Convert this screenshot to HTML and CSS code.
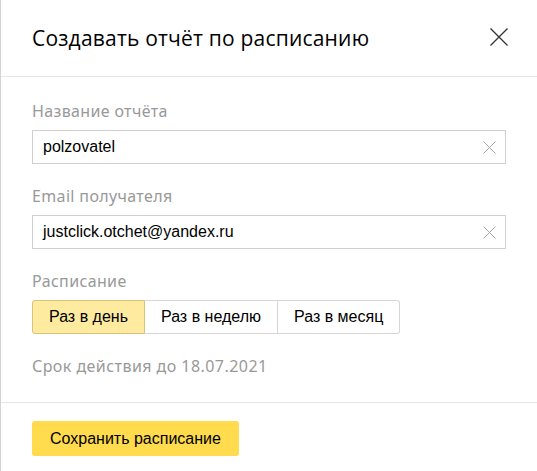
FILE: index.html
```html
<!DOCTYPE html>
<html lang="ru">
<head>
<meta charset="utf-8">
<title>Создавать отчёт по расписанию</title>
<link rel="stylesheet" href="styles.css">
</head>
<body>
<div class="modal">
  <div class="modal-header">
    <h1 class="modal-title">Создавать отчёт по расписанию</h1>
    <button class="close-btn" aria-label="Закрыть">
      <svg width="18" height="18" viewBox="0 0 18 18"><path d="M0.5 0.5 L17.5 17.5 M17.5 0.5 L0.5 17.5" stroke="#333" stroke-width="1.3" fill="none"/></svg>
    </button>
  </div>
  <div class="modal-body">
    <div class="field">
      <div class="field-label">Название отчёта</div>
      <div class="input">
        <span class="input-text">polzovatel</span>
        <svg class="clear" width="13" height="13" viewBox="0 0 13 13"><path d="M0.5 0.5 L12.5 12.5 M12.5 0.5 L0.5 12.5" stroke="#a6a6a6" stroke-width="1" fill="none"/></svg>
      </div>
    </div>
    <div class="field">
      <div class="field-label">Email получателя</div>
      <div class="input">
        <span class="input-text">justclick.otchet@yandex.ru</span>
        <svg class="clear" width="13" height="13" viewBox="0 0 13 13"><path d="M0.5 0.5 L12.5 12.5 M12.5 0.5 L0.5 12.5" stroke="#a6a6a6" stroke-width="1" fill="none"/></svg>
      </div>
    </div>
    <div class="field">
      <div class="field-label">Расписание</div>
      <div class="segmented">
        <span class="seg seg-checked">Раз в день</span>
        <span class="seg">Раз в неделю</span>
        <span class="seg">Раз в месяц</span>
      </div>
    </div>
    <div class="validity">Срок действия до 18.07.2021</div>
  </div>
  <div class="modal-footer">
    <button class="save-btn">Сохранить расписание</button>
  </div>
</div>
</body>
</html>
```
FILE: styles.css
```css
html, body {
  margin: 0;
  padding: 0;
  background: #fff;
}
.modal {
  width: 537px;
  height: 471px;
  box-sizing: border-box;
  border-left: 1px solid #d4d4d4;
  background: #fff;
  overflow: hidden;
}
.modal-header {
  display: flex;
  align-items: flex-start;
  justify-content: space-between;
  padding: 24px 29px 0 31px;
  height: 77px;
  box-sizing: border-box;
  border-bottom: 1px solid #e6e6e6;
}
.modal-title {
  margin: 0;
  font-family: "Open Sans", "Noto Sans", sans-serif;
  font-weight: 400;
  font-size: 21px;
  letter-spacing: 0.2px;
  line-height: 28px;
  color: #000;
}
.close-btn {
  border: 0;
  background: none;
  padding: 0;
  margin-top: 4px;
  width: 18px;
  height: 18px;
  display: block;
}
.close-btn svg { display: block; }
.modal-body {
  padding: 24px 31px 26px 31px;
  display: flex;
  flex-direction: column;
  gap: 22px;
  border-bottom: 1px solid #e6e6e6;
}
.field {
  display: flex;
  flex-direction: column;
  gap: 9px;
}
.field-label {
  font-family: "Noto Sans", sans-serif;
  font-size: 16px;
  letter-spacing: 0.35px;
  line-height: 20px;
  color: #999;
}
.input {
  height: 34px;
  box-sizing: border-box;
  border: 1px solid #d0d0d0;
  display: flex;
  align-items: center;
  justify-content: space-between;
  padding: 0 9px 0 10px;
}
.input-text {
  font-family: "Liberation Sans", Arial, sans-serif;
  font-size: 16px;
  color: #000;
}
.clear { display: block; }
.segmented {
  display: flex;
  align-self: flex-start;
  height: 34px;
}
.seg {
  display: flex;
  align-items: center;
  padding: 0 16px;
  box-sizing: border-box;
  font-family: "Liberation Sans", Arial, sans-serif;
  font-size: 16px;
  color: #000;
  border: 1px solid #d6d6d6;
  border-left-width: 0;
  background: #fff;
}
.seg:first-child {
  border-left-width: 1px;
  border-radius: 3px 0 0 3px;
}
.seg:last-child {
  border-radius: 0 3px 3px 0;
}
.seg-checked {
  background: #ffeba0;
  border-color: #d9c27a;
}
.validity {
  font-family: "Noto Sans", sans-serif;
  font-size: 16px;
  letter-spacing: 0.45px;
  line-height: 20px;
  color: #999;
}
.modal-footer {
  padding: 18px 31px;
}
.save-btn {
  height: 35px;
  padding: 0 18px;
  border: 0;
  border-radius: 3px;
  background: #ffdb4d;
  font-family: "Liberation Sans", Arial, sans-serif;
  font-size: 16px;
  color: #000;
}
```
